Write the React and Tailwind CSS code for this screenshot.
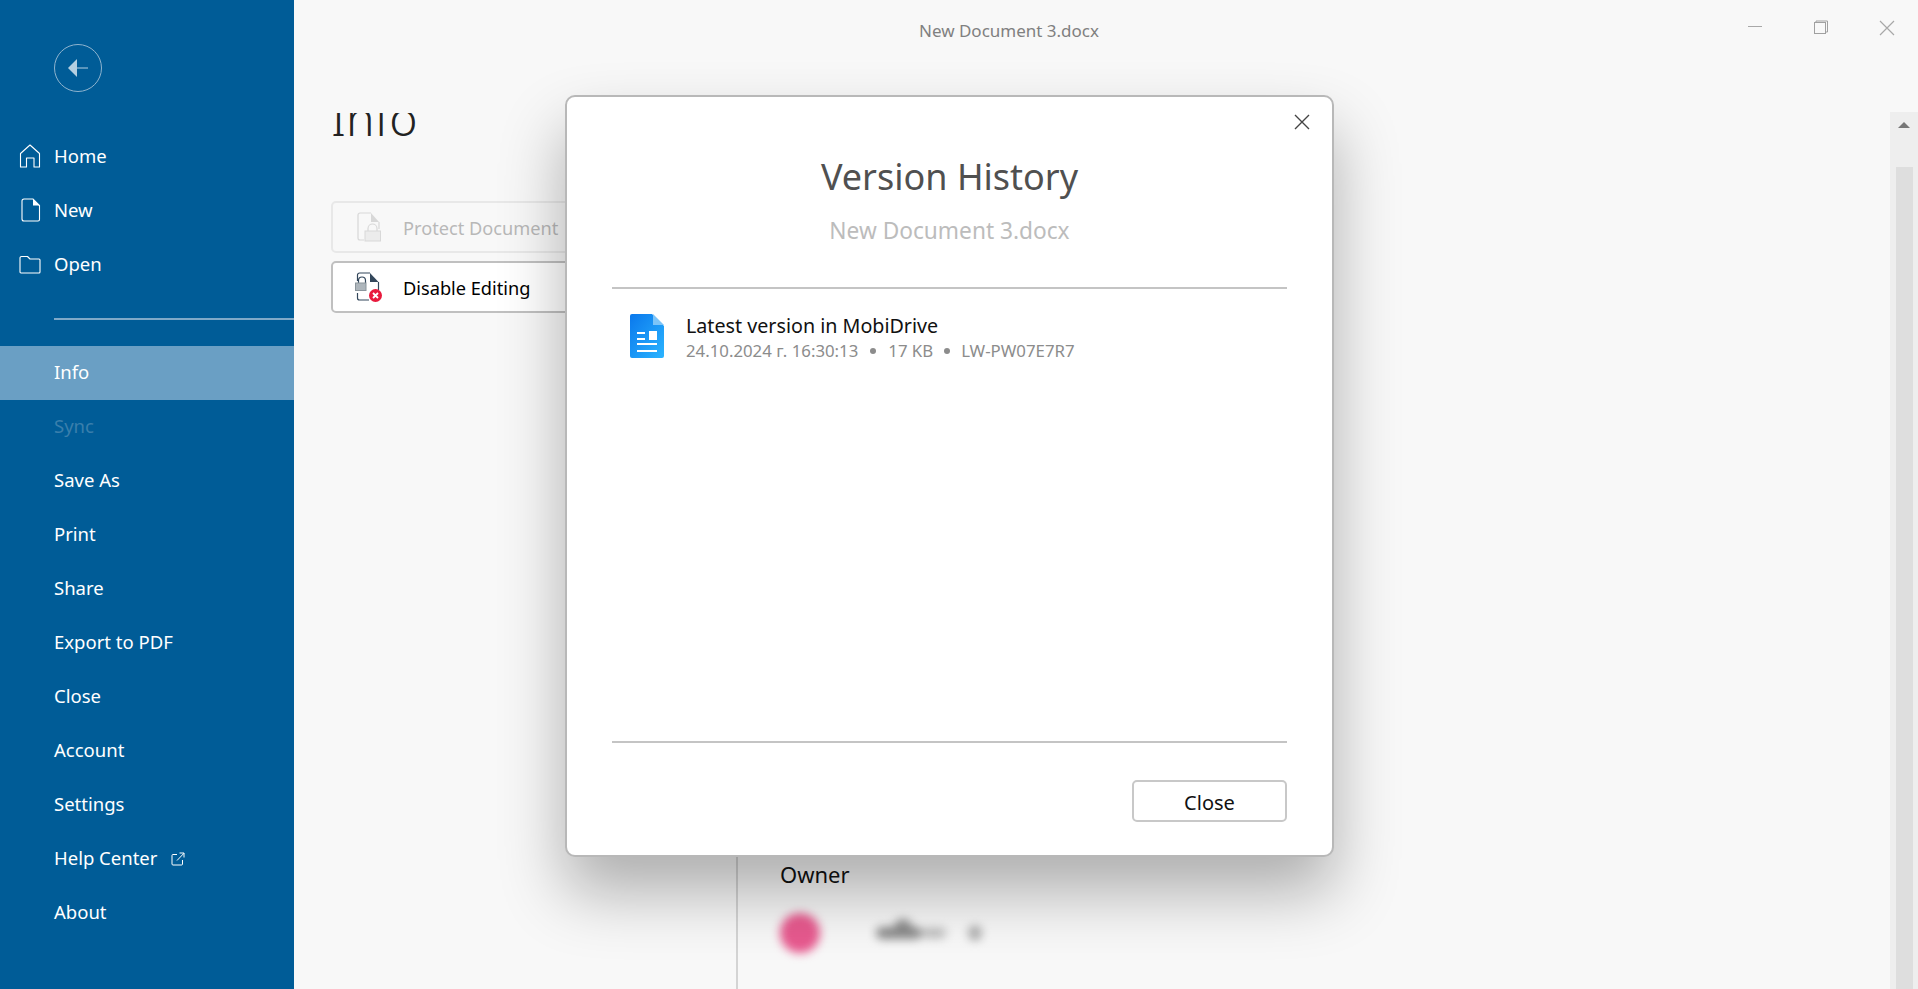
const FONT = "font-['Noto_Sans',sans-serif]";

const topItems = [
  { label: "Home", icon: <HomeIcon /> },
  { label: "New", icon: <NewIcon /> },
  { label: "Open", icon: <FolderIcon /> },
];

const menuItems = ["Info", "Sync", "Save As", "Print", "Share", "Export to PDF", "Close", "Account", "Settings", "Help Center", "About"];

function HomeIcon() {
  return (
    <svg width="22" height="24" viewBox="0 0 22 24" fill="none" stroke="#fff" strokeWidth="1.1">
      <path d="M1.500 23V9.500L11 1l9.500 8.500V23h-5.500v-9H7.500v9z" strokeLinejoin="round" />
    </svg>
  );
}

function NewIcon() {
  return (
    <svg width="20" height="24" viewBox="0 0 20 24" fill="none">
      <path d="M12 1H3a2 2 0 0 0-2 2v18a2 2 0 0 0 2 2h14a1.500 1.500 0 0 0 1.500-1.500V7.500z" stroke="#fff" strokeWidth="1.1" />
      <path d="M12 1l6.500 6.500H12z" fill="#fff" />
    </svg>
  );
}

function FolderIcon() {
  return (
    <svg width="22" height="19" viewBox="0 0 22 19" fill="none" stroke="#fff" strokeWidth="1.1">
      <path d="M1 3a1.500 1.500 0 0 1 1.500-1.500h6L11 4h9a1 1 0 0 1 1 1v12a1 1 0 0 1-1 1H2a1 1 0 0 1-1-1z" strokeLinejoin="round" />
    </svg>
  );
}

function ExternalIcon() {
  return (
    <svg width="14" height="14" viewBox="0 0 14 14" fill="none" stroke="#fff" strokeWidth="1">
      <path d="M6 2.500H2a1 1 0 0 0-1 1V12a1 1 0 0 0 1 1h8.500a1 1 0 0 0 1-1V8" />
      <path d="M6 8.500L13 1.200M8.500 1H13v4.500" />
    </svg>
  );
}

function ProtectIcon() {
  return (
    <svg width="24" height="30" viewBox="0 0 24 30" fill="none">
      <path d="M14 1H3a2 2 0 0 0-2 2v23a2 2 0 0 0 2 2h4" stroke="#d8d8d8" strokeWidth="1.200" />
      <path d="M14 1l8 9h-8z" fill="#d8d8d8" />
      <path d="M22 10v7" stroke="#d8d8d8" strokeWidth="1.200" />
      <path d="M11 19v-2.500a4.500 4.500 0 0 1 9 0V19" stroke="#d8d8d8" strokeWidth="1.200" />
      <rect x="8" y="19" width="15.500" height="10" fill="#ececec" stroke="#d8d8d8" strokeWidth="1" />
    </svg>
  );
}

function DisableIcon() {
  return (
    <svg width="28" height="30" viewBox="0 0 28 30" fill="none">
      <path d="M15 1H4.500a2 2 0 0 0-2 2v6M2.500 21v5a2 2 0 0 0 2 2H14" stroke="#33475b" strokeWidth="1.200" />
      <path d="M15 1l8.500 9H15z" fill="#33475b" />
      <path d="M23.500 10v8" stroke="#33475b" strokeWidth="1.200" />
      <path d="M3.500 11V8.500a3.500 3.500 0 0 1 7 0V11" stroke="#33475b" strokeWidth="1.200" />
      <rect x="0.500" y="11" width="10.500" height="7.500" fill="#aeb6bc" stroke="#8b959c" strokeWidth="1" />
      <circle cx="20.500" cy="23.500" r="6.500" fill="#e8193c" />
      <path d="M18 21l5 5M23 21l-5 5" stroke="#fff" strokeWidth="1.800" />
    </svg>
  );
}

function FileIcon() {
  return (
    <svg width="34" height="44" viewBox="0 0 34 44">
      <defs>
        <linearGradient id="doc" x1="0" y1="0" x2="1" y2="1">
          <stop offset="0" stopColor="#0a78ec" />
          <stop offset="1" stopColor="#2bb4ff" />
        </linearGradient>
      </defs>
      <path d="M2 0h20l12 12v30a2 2 0 0 1-2 2H2a2 2 0 0 1-2-2V2a2 2 0 0 1 2-2z" fill="url(#doc)" />
      <path d="M23 0l11 11H23z" fill="#7cc4f8" />
      <rect x="7" y="18" width="8" height="2" fill="#fff" />
      <rect x="7" y="24" width="8" height="2" fill="#fff" />
      <rect x="19" y="17" width="8" height="9" fill="#fff" />
      <rect x="7" y="29" width="20" height="2" fill="#fff" />
      <rect x="7" y="36" width="20" height="2" fill="#fff" />
    </svg>
  );
}

function Sidebar() {
  return (
    <aside className="flex w-[294px] shrink-0 flex-col bg-[#005c97] text-[18.500px] text-white">
      <div className="pl-[54px] pt-[44px]">
        <div className="flex h-[48px] w-[48px] items-center justify-center rounded-full border border-[#8fb4cf]">
          <svg width="20" height="18" viewBox="0 0 20 18">
            <path d="M0 9l9-9v18z" fill="#b5cfe1" />
            <path d="M8 9h12" stroke="#b5cfe1" strokeWidth="1" />
          </svg>
        </div>
      </div>
      <nav className="mt-[37px]">
        {topItems.map((item) => (
          <div key={item.label} className="flex h-[54px] items-center">
            <div className="flex w-[54px] justify-end pr-[13px]">{item.icon}</div>
            <span>{item.label}</span>
          </div>
        ))}
      </nav>
      <div className="ml-[54px] mt-[27px] h-[2px] bg-[#7fa9c8]" />
      <nav className="mt-[26px]">
        {menuItems.map((label) => (
          <div
            key={label}
            className={`flex h-[54px] items-center pl-[54px] ${label === "Info" ? "bg-[#6a9fc4]" : ""} ${label === "Sync" ? "text-[#3a7fac]" : ""}`}
          >
            <span className="pb-[2px]">{label}</span>
            {label === "Help Center" && (
              <span className="ml-[14px] flex">
                <ExternalIcon />
              </span>
            )}
          </div>
        ))}
      </nav>
    </aside>
  );
}

function WindowControls() {
  return (
    <div className="flex items-start gap-[50px] pr-[23px] pt-[20px]">
      <svg width="16" height="14" viewBox="0 0 16 14" stroke="#a8a8a8" fill="none"><path d="M1 6.500h14" /></svg>
      <svg width="16" height="14" viewBox="0 0 16 14" stroke="#a0a0a0" fill="none"><rect x="1.500" y="2.500" width="11" height="11" /><path d="M3 2.500V1h11.500v11H13" /></svg>
      <svg width="16" height="16" viewBox="0 0 16 16" stroke="#a8a8a8" strokeWidth="1.200" fill="none"><path d="M1 1l14 14M15 1L1 15" /></svg>
    </div>
  );
}

function InfoPage() {
  return (
    <div className="flex min-h-0 flex-1">
      <div className="w-[442px] shrink-0 pl-[37px]">
        {/* the heading is scrolled under the title bar in the original */}
        <div className="mt-[1px] h-[69px] overflow-hidden">
          <h1 className="-mt-[33px] text-[48px] leading-[75px] font-light text-[#222]">Info</h1>
        </div>
        <div className="mt-[19px] flex h-[52px] w-[400px] items-center rounded-[5px] border-2 border-[#e8e8e8] pl-[24px] text-[18.200px] text-[#b8b8b8]">
          <ProtectIcon />
          <span className="ml-[22px] pt-[3px]">Protect Document</span>
        </div>
        <div className="mt-[8px] flex h-[52px] w-[400px] items-center rounded-[5px] border-2 border-[#c0c0c0] bg-white pl-[22px] text-[18.200px] text-black">
          <DisableIcon />
          <span className="ml-[20px] pt-[3px]">Disable Editing</span>
        </div>
      </div>
      <div className="flex min-h-0 flex-1 flex-col border-l-2 border-[#d4d4d4] pl-[42px]">
        <div className="mt-[749px] text-[22px] leading-[26px] text-[#111]">Owner</div>
        <div className="mt-[26px] flex items-center">
          <div className="h-[40px] w-[40px] rounded-full bg-[#e85a8f] blur-[5px]" />
          <div className="relative ml-[56px] flex items-center blur-[5px]">
            <div className="h-[12px] w-[46px] rounded-full bg-[#8a8a8a]" />
            <div className="absolute left-[18px] top-[-8px] h-[18px] w-[18px] rounded-full bg-[#8a8a8a]" />
            <div className="h-[10px] w-[24px] rounded-full bg-[#bbbbbb]" />
          </div>
          <div className="ml-[22px] h-[16px] w-[14px] rounded-full bg-[#b4b4b4] blur-[4px]" />
        </div>
      </div>
    </div>
  );
}

function VersionDialog() {
  return (
    <div className="absolute left-[565px] top-[95px] flex h-[762px] w-[769px] flex-col rounded-[10px] border-2 border-[#b8b8b8] bg-white px-[45px] shadow-[0_35px_65px_rgba(0,0,0,0.3)]">
      <svg className="absolute right-[22px] top-[17px]" width="16" height="16" viewBox="0 0 16 16" stroke="#444" strokeWidth="1.400" fill="none">
        <path d="M1 1l14 14M15 1L1 15" />
      </svg>
      <h2 className="mt-[55px] text-center text-[36px] leading-[50px] text-[#505050]">Version History</h2>
      <div className="mt-[14px] text-center text-[22.700px] leading-[30px] text-[#bcbcbc]">New Document 3.docx</div>
      <div className="mt-[41px] h-[2px] bg-[#c4c4c4]" />
      <div className="mt-[24px] flex flex-1 pl-[18px]">
        <div className="pt-[1px]">
          <FileIcon />
        </div>
        <div className="ml-[22px]">
          <div className="text-[19.700px] leading-[26px] text-[#111]">Latest version in MobiDrive</div>
          <div className="mt-[1px] flex text-[16.800px] leading-[22px] text-[#8c8c8c]">
            <span>24.10.2024 г. 16:30:13</span>
            <span className="mx-[12px] h-[6px] w-[6px] self-center rounded-full bg-[#8c8c8c]" />
            <span>17 KB</span>
            <span className="mx-[11px] h-[6px] w-[6px] self-center rounded-full bg-[#8c8c8c]" />
            <span>LW-PW07E7R7</span>
          </div>
        </div>
      </div>
      <div className="h-[2px] bg-[#c4c4c4]" />
      <div className="flex justify-end pb-[33px] pt-[37px]">
        <button className="h-[42px] w-[155px] rounded-[5px] border-2 border-[#c8c8c8] pt-[3px] text-[20px] text-[#111]">Close</button>
      </div>
    </div>
  );
}

export default function App() {
  return (
    <div className={`relative flex h-[989px] w-[1918px] overflow-hidden bg-[#f8f8f8] ${FONT}`}>
      <Sidebar />
      <main className="flex min-w-0 flex-1 flex-col">
        <div className="flex h-[112px] justify-between">
          <div className="w-[1430px] pt-[18px] text-center text-[17px] leading-[26px] text-[#808080]">New Document 3.docx</div>
          <WindowControls />
        </div>
        <div className="flex min-h-0 flex-1">
          <InfoPage />
          <div className="flex w-[28px] shrink-0 flex-col items-center bg-[#eeeeee]">
            <svg className="mt-[10px]" width="12" height="6" viewBox="0 0 12 6"><path d="M6 0l6 6H0z" fill="#777" /></svg>
            <div className="mt-[39px] w-[17px] flex-1 bg-[#dedede]" />
          </div>
        </div>
      </main>
      <VersionDialog />
    </div>
  );
}
